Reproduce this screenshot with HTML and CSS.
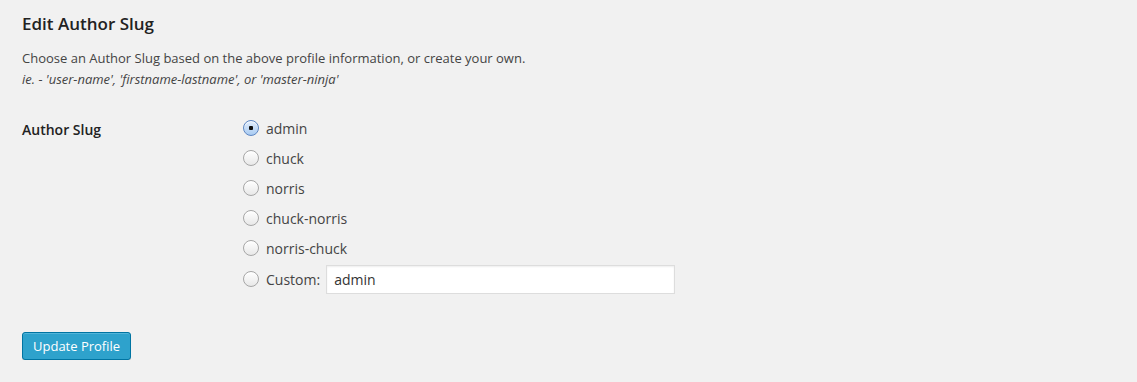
FILE: index.html
```html
<!DOCTYPE html>
<html lang="en">
<head>
  <meta charset="UTF-8">
  <title>Edit Author Slug</title>
  <link rel="stylesheet" href="styles.css">
</head>
<body>
  <div class="wrap">
    <h3>Edit Author Slug</h3>
    <p class="desc">Choose an Author Slug based on the above profile information, or create your own.<br>
      <em>ie. - 'user-name', 'firstname-lastname', or 'master-ninja'</em></p>

    <table class="form-table">
      <tr>
        <th><label>Author Slug</label></th>
        <td>
          <fieldset>
            <label class="choice"><input type="radio" name="slug" value="admin" checked> <span>admin</span></label>
            <label class="choice"><input type="radio" name="slug" value="chuck"> <span>chuck</span></label>
            <label class="choice"><input type="radio" name="slug" value="norris"> <span>norris</span></label>
            <label class="choice"><input type="radio" name="slug" value="chuck-norris"> <span>chuck-norris</span></label>
            <label class="choice"><input type="radio" name="slug" value="norris-chuck"> <span>norris-chuck</span></label>
            <label class="choice custom"><input type="radio" name="slug" value="custom"> <span>Custom:</span>
              <input type="text" class="custom-text" value="admin"></label>
          </fieldset>
        </td>
      </tr>
    </table>

    <p class="submit"><button type="button" class="button-primary">Update Profile</button></p>
  </div>
</body>
</html>
```

FILE: styles.css
```css
body {
  margin: 0;
  background-color: #f1f1f1;
  color: #444;
  font-family: "Open Sans", sans-serif;
  font-size: 13px;
}
.wrap {
  padding: 0 22px;
}
h3 {
  margin: 0;
  padding-top: 12px;
  font-size: 17px;
  font-weight: 600;
  color: #222;
  line-height: 24px;
}
.desc {
  margin: 12px 0 0;
  line-height: 21px;
  font-size: 13px;
}
.form-table {
  border-collapse: collapse;
  margin-top: 14px;
}
.form-table th {
  width: 210px;
  text-align: left;
  vertical-align: top;
  padding: 16px 0 0;
  font-size: 14px;
  font-weight: 600;
  color: #222;
  line-height: 20px;
}
.form-table td {
  padding: 9px 0 0 10px;
}
fieldset {
  border: 0;
  margin: 0;
  padding: 0;
}
.choice {
  display: flex;
  align-items: center;
  height: 30px;
  font-size: 14px;
}
.choice.custom {
  height: 32px;
}
.choice span {
  margin-left: 7px;
}
input[type="radio"] {
  appearance: none;
  -webkit-appearance: none;
  margin: 0 0 0 1px;
  width: 16px;
  height: 16px;
  border-radius: 50%;
  border: 1px solid #a6a6a6;
  background: linear-gradient(#ffffff, #e8e8e8);
  box-shadow: inset 0 1px 1px rgba(255,255,255,0.8);
}
input[type="radio"]:checked {
  border-color: #5d86c2;
  background: radial-gradient(circle, #111 0, #111 2px, transparent 2.5px), linear-gradient(#e3eefc, #a8cbf2);
}
.custom-text {
  margin-left: 6px;
  width: 349px;
  height: 29px;
  box-sizing: border-box;
  border: 1px solid #ddd;
  background: #fff;
  padding: 3px 7px;
  font-family: "Open Sans", sans-serif;
  font-size: 14px;
  color: #333;
  box-shadow: inset 0 1px 2px rgba(0,0,0,0.07);
}
.submit {
  margin: 0;
  padding: 37px 0 0;
}
.button-primary {
  height: 28px;
  padding: 0 10px;
  border: 1px solid #0074a2;
  border-radius: 3px;
  background: #2ea2cc;
  color: #fff;
  font-family: "Open Sans", sans-serif;
  font-size: 13px;
  box-shadow: inset 0 1px 0 rgba(120,200,230,0.5), 0 1px 0 rgba(0,0,0,0.15);
  cursor: pointer;
}
```
